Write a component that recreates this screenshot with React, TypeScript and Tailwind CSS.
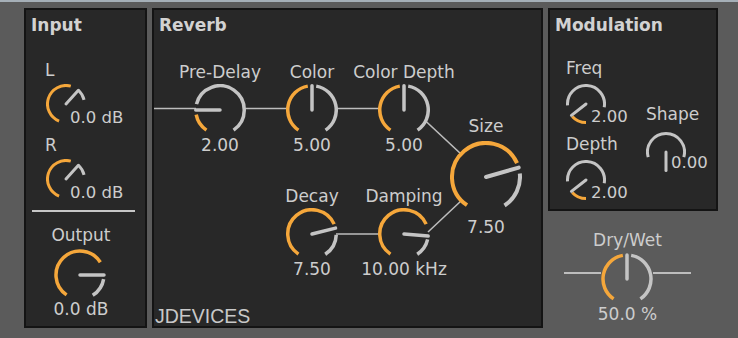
import React from "react";

const ORANGE = "#f5a73b";
const GRAY = "#c4c4c4";

type Range = [number, number] | null;

type KnobProps = {
  d: number;
  r: number;
  sw: number;
  pointer: number;
  orange: Range;
  gray: Range;
  pr?: number;
};

function Knob({ d, r, sw, pointer, orange, gray, pr }: KnobProps) {
  const c = d / 2;
  const pt = (a: number, rr: number) => {
    const t = (a * Math.PI) / 180;
    return [c + rr * Math.sin(t), c - rr * Math.cos(t)];
  };
  const arc = (a1: number, a2: number) => {
    const [x1, y1] = pt(a1, r);
    const [x2, y2] = pt(a2, r);
    const large = a2 - a1 > 180 ? 1 : 0;
    return `M ${x1} ${y1} A ${r} ${r} 0 ${large} 1 ${x2} ${y2}`;
  };
  const [px, py] = pt(pointer, pr ?? r);
  return (
    <svg width={d} height={d} className="block" viewBox={`0 0 ${d} ${d}`}>
      {orange && <path d={arc(orange[0], orange[1])} stroke={ORANGE} strokeWidth={sw} fill="none" />}
      {gray && <path d={arc(gray[0], gray[1])} stroke={GRAY} strokeWidth={sw} fill="none" />}
      <line x1={c} y1={c} x2={px} y2={py} stroke={GRAY} strokeWidth={sw} strokeLinecap="round" />
    </svg>
  );
}

function SmallKnob({
  pointer,
  orange,
  gray,
  value,
  valLeft,
  valTop,
}: {
  pointer: number;
  orange: Range;
  gray: Range;
  value: string;
  valLeft: number;
  valTop: number;
}) {
  return (
    <div className="relative w-[40px] h-[40px]">
      <Knob d={40} r={18.5} sw={3} pointer={pointer} orange={orange} gray={gray} />
      <div
        className="absolute leading-[20px] text-[16.5px] whitespace-nowrap"
        style={{ left: valLeft, top: valTop }}
      >
        {value}
      </div>
    </div>
  );
}

function BigGroup({
  label,
  value,
  pointer,
  orange,
  gray,
}: {
  label: string;
  value: string;
  pointer: number;
  orange: Range;
  gray: Range;
}) {
  return (
    <div className="flex flex-col items-center w-[80px]">
      <div className="leading-[20px] whitespace-nowrap">{label}</div>
      <div className="mt-[2px]">
        <Knob d={52} r={24.25} sw={3.5} pointer={pointer} orange={orange} gray={gray} />
      </div>
      <div className="-mt-[1px] leading-[20px] whitespace-nowrap">{value}</div>
    </div>
  );
}

export default function App() {
  return (
    <div className="w-[738px] h-[338px] bg-[#5b5b5b] overflow-hidden font-['DejaVu_Sans',sans-serif] text-[17px] text-[#cdcdcd]">
      <div className="h-[2px] bg-[#a5afb7]" />
      <div className="flex gap-[5px] pl-[24px] pt-[6px]">
        {/* Input */}
        <div className="w-[123px] h-[320px] border-2 border-[#141414] bg-[#282828] flex flex-col">
          <div className="pl-[5px] mt-[5px] leading-[20px] font-bold text-[17px] text-[#d2d2d2]">Input</div>
          <div className="ml-[19px] mt-[25px] leading-[20px]">L</div>
          <div className="ml-[20px] mt-[4px]">
            <SmallKnob pointer={42} orange={[-158, 15]} gray={[42, 77]} value="0.0 dB" valLeft={24} valTop={24} />
          </div>
          <div className="ml-[19px] mt-[11px] leading-[20px]">R</div>
          <div className="ml-[20px] mt-[4px]">
            <SmallKnob pointer={42} orange={[-158, 15]} gray={[42, 77]} value="0.0 dB" valLeft={24} valTop={24} />
          </div>
          <div className="ml-[6px] mt-[11px] w-[103px] h-[2px] bg-[#c6c6c6]" />
          <div className="w-[110px] mt-[13px] text-center leading-[20px]">Output</div>
          <div className="ml-[28px] mt-[4px]">
            <Knob d={52} r={24} sw={3.5} pointer={90} orange={[-146, 58]} gray={[100, 148]} />
          </div>
          <div className="w-[110px] -mt-[2px] text-center leading-[20px]">0.0 dB</div>
        </div>

        {/* Reverb */}
        <div className="relative w-[391px] h-[320px] border-2 border-[#141414] bg-[#282828] flex flex-col">
          <svg className="absolute left-0 top-0" width={387} height={316}>
            <g stroke="#bdbdbd" strokeWidth={1.6} fill="none">
              <line x1={0} y1={98.5} x2={42} y2={98.5} />
              <line x1={90} y1={98.5} x2={134} y2={98.5} />
              <line x1={182} y1={98.5} x2={226} y2={98.5} />
              <line x1={271.6} y1={111} x2={307} y2={144} />
              <line x1={182} y1={224} x2={226} y2={224} />
              <line x1={274} y1={222} x2={308} y2={190} />
            </g>
          </svg>
          <div className="pl-[5px] mt-[5px] leading-[20px] font-bold text-[17px] text-[#d2d2d2]">Reverb</div>
          <div className="relative flex items-start ml-[26px] mt-[27px]">
            <div className="flex flex-col">
              <div className="flex gap-[12px]">
                <BigGroup label="Pre-Delay" value="2.00" pointer={-90} orange={[-146, -101]} gray={[-76, 146]} />
                <BigGroup label="Color" value="5.00" pointer={0} orange={[-146, -10]} gray={[10, 146]} />
                <BigGroup label="Color Depth" value="5.00" pointer={0} orange={[-146, -10]} gray={[10, 146]} />
              </div>
              <div className="flex gap-[12px] ml-[92px] mt-[31px]">
                <BigGroup label="Decay" value="7.50" pointer={76} orange={[-146, 66]} gray={[92, 147]} />
                <BigGroup label="Damping" value="10.00 kHz" pointer={95} orange={[-146, 66]} gray={[103, 147]} />
              </div>
            </div>
            <div className="ml-[2px] mt-[54px] w-[80px] flex flex-col items-center">
              <div className="leading-[20px]">Size</div>
              <div className="mt-[5px]">
                <Knob d={72} r={34} sw={4} pointer={74} orange={[-146, 66]} gray={[84, 147]} />
              </div>
              <div className="mt-[4px] leading-[20px]">7.50</div>
            </div>
          </div>
          <div className="mt-auto ml-[1px] leading-[19px] font-['Liberation_Sans',Arial,sans-serif] text-[19.5px] text-[#c8c8c8]">
            JDEVICES
          </div>
        </div>

        {/* Right column */}
        <div className="flex flex-col w-[170px]">
          <div className="h-[203px] border-2 border-[#141414] bg-[#282828] flex flex-col">
            <div className="pl-[5px] mt-[5px] leading-[20px] font-bold text-[17px] text-[#d2d2d2]">Modulation</div>
            <div className="flex items-start mt-[23px]">
              <div className="flex flex-col ml-[16px] w-[40px]">
                <div className="leading-[20px]">Freq</div>
                <div className="mt-[6px]">
                  <SmallKnob pointer={-128} orange={[-180, -132]} gray={[-94, 100]} value="2.00" valLeft={25} valTop={23} />
                </div>
                <div className="mt-[10px] leading-[20px]">Depth</div>
                <div className="mt-[6px]">
                  <SmallKnob pointer={-128} orange={[-180, -132]} gray={[-94, 100]} value="2.00" valLeft={25} valTop={23} />
                </div>
              </div>
              <div className="flex flex-col ml-[40px] mt-[46px]">
                <div className="leading-[20px]">Shape</div>
                <div className="mt-[8px]">
                  <SmallKnob pointer={180} orange={null} gray={[-106, 106]} value="0.00" valLeft={25} valTop={21} />
                </div>
              </div>
            </div>
          </div>
          <div className="flex flex-col ml-[16px] w-[127px] mt-[19px]">
            <div className="text-center leading-[20px]">Dry/Wet</div>
            <div className="flex items-start mt-[3px]">
              <div className="mt-[19px] w-[37px] h-[2px] bg-[#bdbdbd]" />
              <Knob d={52} r={24} sw={3.5} pointer={0} orange={[-146, -10]} gray={[10, 146]} />
              <div className="mt-[19px] w-[38px] h-[2px] bg-[#bdbdbd]" />
            </div>
            <div className="text-center -mt-[1px] leading-[20px]">50.0 %</div>
          </div>
        </div>
      </div>
    </div>
  );
}
